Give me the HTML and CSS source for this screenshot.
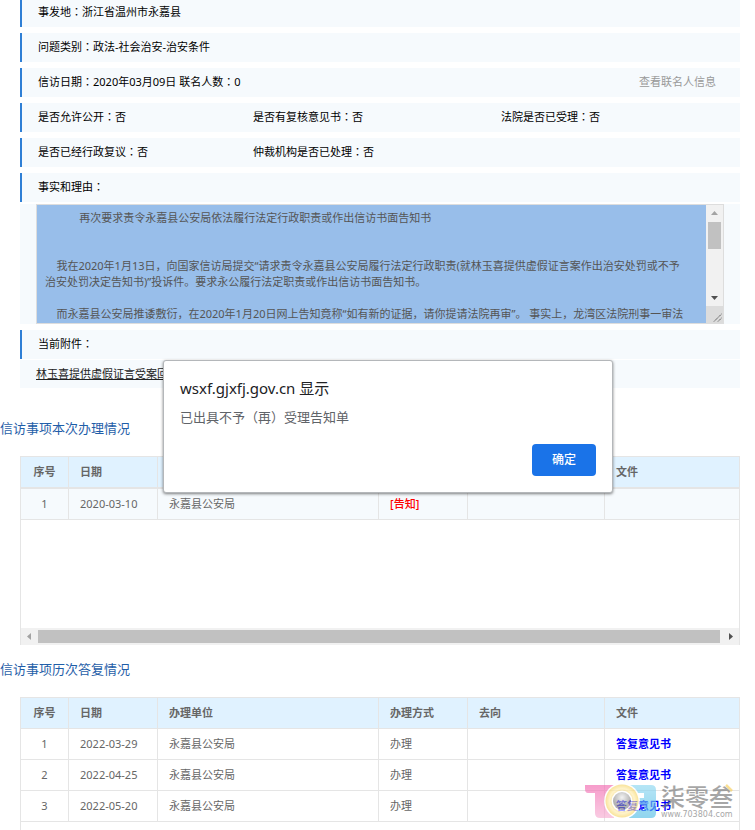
FILE: index.html
```html
<!DOCTYPE html>
<html>
<head>
<meta charset="utf-8">
<meta name="viewport" content="width=device-width, initial-scale=1">
<title>信访事项</title>
<link rel="stylesheet" href="styles.css">
</head>
<body>
<main class="page">
  <section class="details">
    <div class="row"><span>事发地<i class="colon" lang="ja">：</i>浙江省温州市永嘉县</span></div>
    <div class="row"><span>问题类别<i class="colon" lang="ja">：</i>政法-社会治安-治安条件</span></div>
    <div class="row row-split"><span>信访日期<i class="colon" lang="ja">：</i>2020年03月09日 联名人数<i class="colon" lang="ja">：</i>0</span><a class="more" href="#">查看联名人信息</a></div>
    <div class="row row-grid"><span>是否允许公开<i class="colon" lang="ja">：</i>否</span><span>是否有复核意见书<i class="colon" lang="ja">：</i>否</span><span>法院是否已受理<i class="colon" lang="ja">：</i>否</span></div>
    <div class="row row-grid"><span>是否已经行政复议<i class="colon" lang="ja">：</i>否</span><span>仲裁机构是否已处理<i class="colon" lang="ja">：</i>否</span></div>
    <div class="group">
      <div class="row"><label for="facts">事实和理由<i class="colon" lang="ja">：</i></label></div>
      <div class="facts">
        <div class="facts-box">
          <textarea id="facts" class="facts-text" readonly>
            再次要求责令永嘉县公安局依法履行法定行政职责或作出信访书面告知书


    我在2020年1月13日，向国家信访局提交“请求责令永嘉县公安局履行法定行政职责(就林玉喜提供虚假证言案作出治安处罚或不予
治安处罚决定告知书)”投诉件。要求永公履行法定职责或作出信访书面告知书。

    而永嘉县公安局推诿敷衍，在2020年1月20日网上告知竟称“如有新的证据，请你提请法院再审”。 事实上，龙湾区法院刑事一审法</textarea>
          <div class="vbar">
            <svg class="arrow" viewBox="0 0 17 17"><path d="M5 10h7L8.500 6z" fill="#a3a3a3"/></svg>
            <div class="vthumb"></div>
            <svg class="arrow arrow-end" viewBox="0 0 17 17"><path d="M5 7h7L8.500 11z" fill="#505050"/></svg>
            <svg class="arrow grip" viewBox="0 0 17 17"><path d="M8 15.500L15.500 8M12 15.500L15.500 12" stroke="#555" stroke-dasharray="1.400 .5" fill="none"/></svg>
          </div>
        </div>
      </div>
    </div>
    <div class="group group-tight">
      <div class="row"><span>当前附件<i class="colon" lang="ja">：</i></span></div>
      <div class="attachment"><a href="#">林玉喜提供虚假证言受案回执</a></div>
    </div>
  </section>

  <h2 class="title">信访事项本次办理情况</h2>
  <section class="frame">
    <div class="frame-body">
      <table class="grid grid-current">
        <colgroup><col class="c-no"><col class="c-date"><col class="c-unit"><col class="c-way"><col class="c-to"><col></colgroup>
        <thead><tr><th class="no">序号</th><th>日期</th><th>办理单位</th><th>办理方式</th><th>去向</th><th>文件</th></tr></thead>
        <tbody><tr><td class="no">1</td><td>2020-03-10</td><td>永嘉县公安局</td><td><a class="notice" href="#">[告知]</a></td><td></td><td></td></tr></tbody>
      </table>
    </div>
    <div class="hbar">
      <svg class="arrow" viewBox="0 0 17 17"><path d="M10 5v7L6 8.500z" fill="#a3a3a3"/></svg>
      <div class="hthumb"></div>
      <svg class="arrow" viewBox="0 0 17 17"><path d="M7 5v7L11 8.500z" fill="#505050"/></svg>
    </div>
  </section>

  <h2 class="title title-history">信访事项历次答复情况</h2>
  <section class="frame frame-open">
    <table class="grid">
      <colgroup><col class="c-no"><col class="c-date"><col class="c-unit"><col class="c-way"><col class="c-to"><col></colgroup>
      <thead><tr><th class="no">序号</th><th>日期</th><th>办理单位</th><th>办理方式</th><th>去向</th><th>文件</th></tr></thead>
      <tbody>
        <tr><td class="no">1</td><td>2022-03-29</td><td>永嘉县公安局</td><td>办理</td><td></td><td><a class="reply" href="#">答复意见书</a></td></tr>
        <tr><td class="no">2</td><td>2022-04-25</td><td>永嘉县公安局</td><td>办理</td><td></td><td><a class="reply" href="#">答复意见书</a></td></tr>
        <tr><td class="no">3</td><td>2022-05-20</td><td>永嘉县公安局</td><td>办理</td><td></td><td><a class="reply" href="#">答复意见书</a></td></tr>
      </tbody>
    </table>
  </section>

  <div class="dialog" role="alertdialog" aria-labelledby="dlg-title" aria-describedby="dlg-text">
    <h1 id="dlg-title" class="dialog-title">wsxf.gjxfj.gov.cn 显示</h1>
    <p id="dlg-text" class="dialog-text">已出具不予（再）受理告知单</p>
    <button type="button" class="ok">确定</button>
  </div>

  <div class="watermark">
    <svg class="mark" viewBox="0 0 73 36" aria-hidden="true">
      <defs>
        <linearGradient id="pink" x1="0" y1="0" x2="0" y2="1"><stop offset="0" stop-color="#f268b0"/><stop offset="1" stop-color="#f7b0d3"/></linearGradient>
        <linearGradient id="blue" x1="0" y1="0" x2="0" y2="1"><stop offset="0" stop-color="#8fd9f2"/><stop offset="1" stop-color="#55bfe6"/></linearGradient>
        <radialGradient id="gold"><stop offset=".5" stop-color="#f3cf62"/><stop offset=".75" stop-color="#ffeeb0"/><stop offset="1" stop-color="#f6d565"/></radialGradient>
        <radialGradient id="lens" cx=".5" cy=".3"><stop offset="0" stop-color="#ececec"/><stop offset="1" stop-color="#8b8b8b"/></radialGradient>
      </defs>
      <path d="M1 1h29v33H16q-5 0-5-5V9H4Q1 9 1 5z" fill="url(#pink)"/>
      <path d="M45 1h22q5 0 5 5v23q0 5-5 5H45v-8h15v-5h-8v-7h8V9H45z" fill="url(#blue)"/>
      <circle cx="38" cy="17" r="18" fill="#fff"/>
      <circle cx="38" cy="17" r="16.500" fill="url(#gold)"/>
      <circle cx="38" cy="17" r="10.500" fill="#fff"/>
      <circle cx="38" cy="17" r="9" fill="url(#lens)"/>
    </svg>
    <div class="brand"><span class="brand-name">柒零叁</span><span class="brand-url">www.703804.com</span>
      <svg class="spark" viewBox="0 0 8 8" aria-hidden="true"><path d="M1 1L7 7" stroke="#f8cf5a" stroke-width="2.500"/></svg>
    </div>
  </div>
</main>
</body>
</html>
```
FILE: styles.css
```css
* { box-sizing: border-box; }

body {
  margin: 0;
  background: #fff;
  color: #000;
  font: 11px/16px "Noto Sans", "Noto Sans CJK SC", sans-serif;
}

.page {
  position: relative;
  display: flex;
  flex-direction: column;
  min-height: 100vh;
  padding-right: 15px;
  overflow: hidden;
}

.colon { font-family: "Noto Sans CJK JP", sans-serif; font-style: normal; line-height: 1; }

.details {
  display: flex;
  flex-direction: column;
  gap: 6px;
  margin: -2px 0 0 20px;
}

.row {
  display: flex;
  align-items: center;
  height: 29px;
  padding: 0 24px 2px 16px;
  background: #f6fafd;
  border-left: 2px solid #2f7fd5;
}
.row-split { justify-content: space-between; }
.row-grid { display: grid; grid-template-columns: 215px 248px 1fr; }
.more { color: #999; text-decoration: none; }

.group { display: flex; flex-direction: column; gap: 2px; }
.group-tight { gap: 1px; }

.facts { padding: 0 16px; background: #f6fafd; }
.facts-box {
  display: flex;
  height: 120px;
  border: 1px solid #ddd;
}
.facts-text {
  flex: 1;
  min-width: 0;
  padding: 5px 0 0 8px;
  border: 0;
  outline: 0;
  resize: none;
  overflow: hidden;
  white-space: pre;
  background: #98beea;
  color: #555;
  font: inherit;
}
.vbar { display: flex; flex-direction: column; width: 17px; background: #f1f1f1; }
.vthumb { height: 27px; margin: 0 2px; background: #c1c1c1; }
.arrow { display: block; flex: none; width: 17px; height: 17px; }
.arrow-end { margin-top: auto; }
.grip { background: #dcdcdc; }

.attachment { padding: 6px 16px; background: #f6fafd; }
.attachment a { color: #222; }

.title {
  margin: 30px 0 18px;
  color: #1f5ea8;
  font-size: 13px;
  font-weight: 400;
  line-height: 20px;
}
.title-history { margin-top: 14px; }

.frame { margin-left: 20px; border: 1px solid #e5e5e5; border-width: 1px 1px 0; }
.frame-open { flex: 1; }
.frame-body { min-height: 171px; }

.grid {
  width: 100%;
  table-layout: fixed;
  border-spacing: 0;
  color: #666;
}
.c-no { width: 48px; }
.c-date { width: 89px; }
.c-unit { width: 221px; }
.c-way { width: 89px; }
.c-to { width: 137px; }
.grid th,
.grid td {
  height: 31px;
  padding: 0 11px;
  border: 0 solid #e5e5e5;
  border-width: 0 1px 1px 0;
  text-align: left;
}
.grid th { background: #e0f2ff; font-weight: 700; }
.grid tr > :last-child { border-right: 0; }
.grid .no { padding: 0; text-align: center; }
.grid-current th { height: 32px; border-bottom-width: 2px; }
.grid-current td { background: #f6fafd; }
.notice { color: #f00; font-weight: 500; text-decoration: none; }
.reply { color: #00f; font-weight: 700; text-decoration: none; }

.hbar { display: flex; height: 17px; background: #f1f1f1; }
.hthumb { flex: 1; margin: 2px 2px 2px 0; background: #c1c1c1; }

.dialog {
  position: absolute;
  top: 360px;
  left: 163px;
  display: flex;
  flex-direction: column;
  width: 450px;
  padding: 16px;
  background: #fff;
  border: 1px solid #b4b7ba;
  border-radius: 3px;
  box-shadow: 0 1px 3px rgba(0, 0, 0, .5);
}
.dialog-title { margin: 0 0 8px; color: #202124; font-size: 15px; font-weight: 400; line-height: 22px; }
.dialog-text { margin: 0 0 17px; color: #5f6368; font-size: 13px; line-height: 20px; }
.ok {
  align-self: flex-end;
  width: 64px;
  height: 32px;
  padding: 0;
  border: 0;
  border-radius: 4px;
  background: #1a73e8;
  color: #fff;
  font: 500 12px/16px "Noto Sans", "Noto Sans CJK SC", sans-serif;
}

.watermark {
  position: absolute;
  right: 22px;
  bottom: 10px;
  display: flex;
  gap: 4px;
  opacity: .65;
  pointer-events: none;
}
.mark { width: 73px; height: 36px; }
.brand { position: relative; display: flex; flex-direction: column; color: #777; }
.brand-name { font-size: 24px; line-height: 26px; font-weight: 500; }
.brand-url { font: 8px/10px "DejaVu Sans", sans-serif; }
.spark { position: absolute; top: 0; right: 0; width: 8px; height: 8px; }
```
